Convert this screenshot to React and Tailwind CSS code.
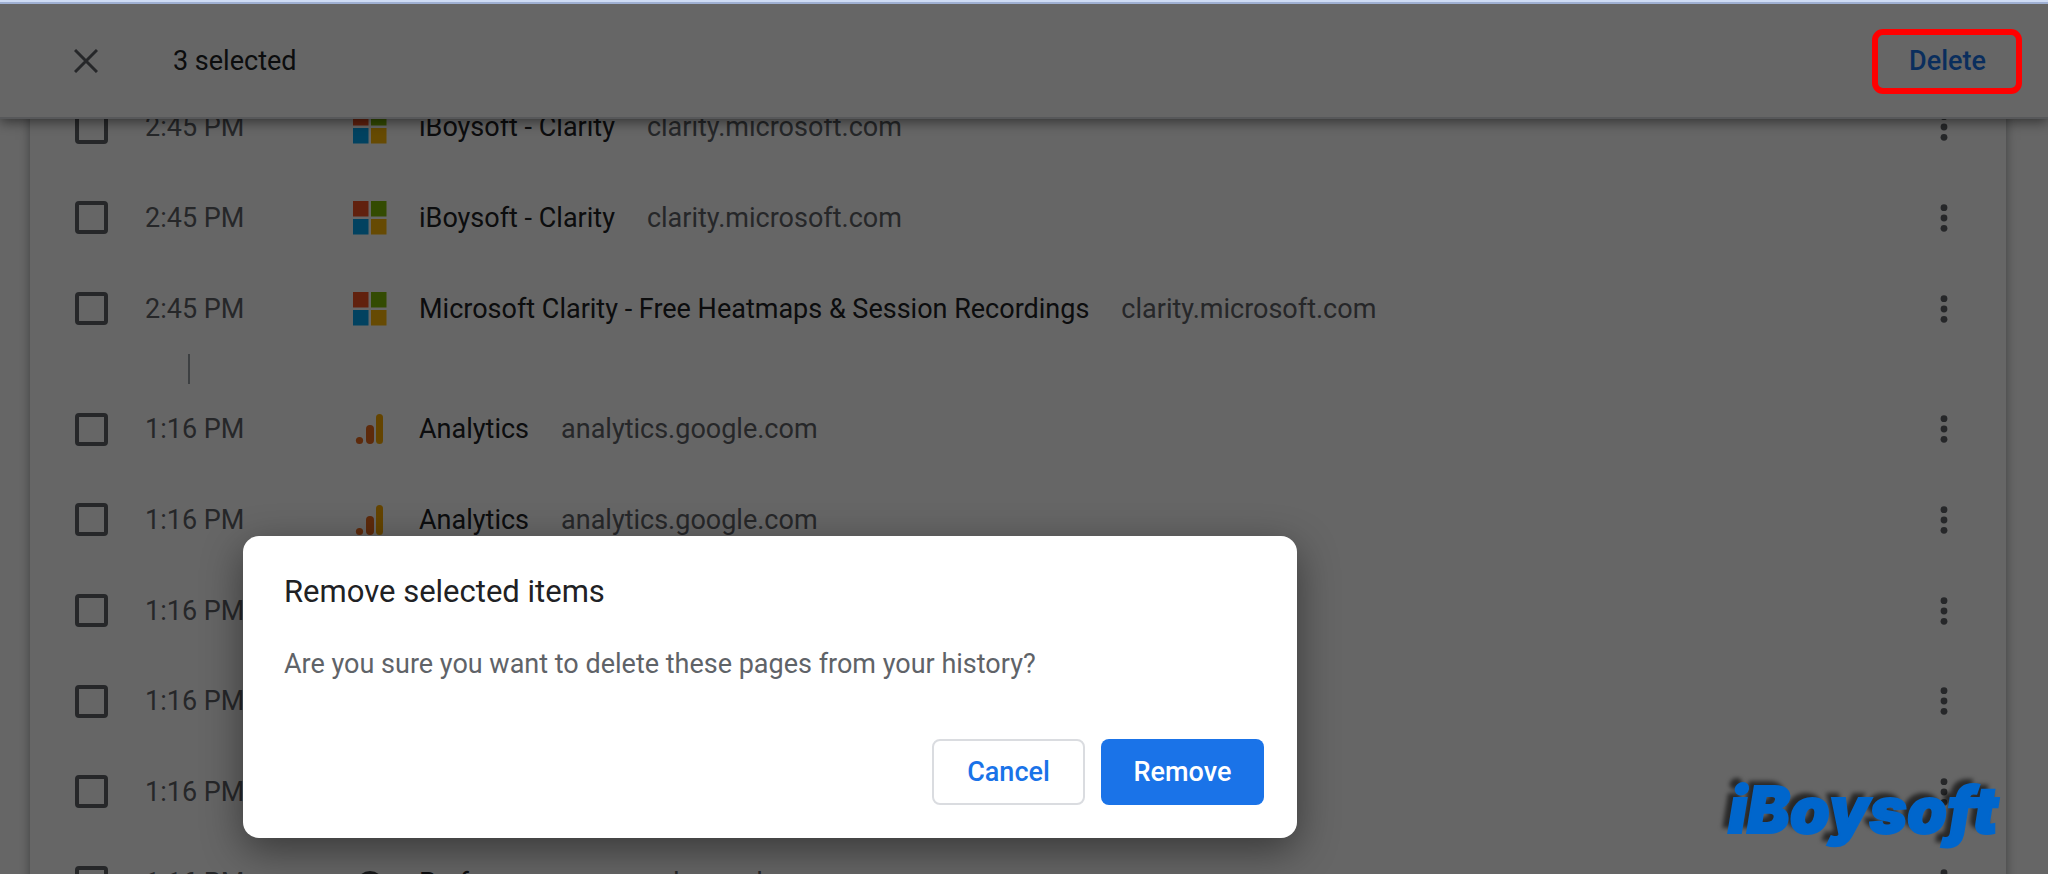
import React from "react";

const visits = [
  { time: "2:45 PM", icon: "microsoft", title: "iBoysoft - Clarity", domain: "clarity.microsoft.com" },
  { time: "2:45 PM", icon: "microsoft", title: "iBoysoft - Clarity", domain: "clarity.microsoft.com" },
  { time: "2:45 PM", icon: "microsoft", title: "Microsoft Clarity - Free Heatmaps & Session Recordings", domain: "clarity.microsoft.com" },
];

const earlierVisits = [
  { time: "1:16 PM", icon: "analytics", title: "Analytics", domain: "analytics.google.com" },
  { time: "1:16 PM", icon: "analytics", title: "Analytics", domain: "analytics.google.com" },
  { time: "1:16 PM", icon: "analytics", title: "Analytics", domain: "analytics.google.com" },
  { time: "1:16 PM", icon: "analytics", title: "Analytics", domain: "analytics.google.com" },
  { time: "1:16 PM", icon: "analytics", title: "Analytics", domain: "analytics.google.com" },
  { time: "1:16 PM", icon: "search", title: "Performance", domain: "search.google.com" },
];

function Favicon({ name }) {
  if (name === "microsoft") {
    return (
      <svg viewBox="0 0 34 34" className="size-[34px] shrink-0" aria-hidden="true">
        <rect x="0" y="0" width="15.5" height="15.5" fill="#f35325" />
        <rect x="18" y="0" width="15.5" height="15.5" fill="#81bc06" />
        <rect x="0" y="18" width="15.5" height="15.5" fill="#05a6f0" />
        <rect x="18" y="18" width="15.5" height="15.5" fill="#ffba08" />
      </svg>
    );
  }
  if (name === "analytics") {
    return (
      <svg viewBox="0 0 34 34" className="size-[34px] shrink-0" aria-hidden="true">
        <rect x="23" y="2" width="7" height="30" rx="3.5" fill="#f9ab00" />
        <rect x="13" y="13" width="8" height="19" rx="4" fill="#e8691c" />
        <circle cx="6.5" cy="28.5" r="3.6" fill="#e8691c" />
      </svg>
    );
  }
  return (
    <svg viewBox="0 0 34 34" className="size-[34px] shrink-0" aria-hidden="true">
      <circle cx="17" cy="19" r="12" fill="none" stroke="#3c4043" strokeWidth="4" />
    </svg>
  );
}

function Row({ id, visit }) {
  return (
    <li className="flex items-center pr-[42px] pl-[45px]">
      <input
        id={id}
        type="checkbox"
        className="size-[33px] shrink-0 appearance-none rounded-[4px] border-4 border-[#5f6368]"
      />
      <label htmlFor={id} className="flex flex-1 items-center">
        <span className="ml-[37px] w-[208px] text-[#5f6368]">{visit.time}</span>
        <Favicon name={visit.icon} />
        <span className="ml-8 text-[#202124]">{visit.title}</span>
        <span className="ml-8 text-[#5f6368]">{visit.domain}</span>
      </label>
      <button type="button" aria-label="Actions" className="flex w-10 justify-center">
        <svg viewBox="0 0 8 28" className="h-7 w-2" fill="#5f6368" aria-hidden="true">
          <circle cx="4" cy="3.7" r="3.4" />
          <circle cx="4" cy="14" r="3.4" />
          <circle cx="4" cy="24.3" r="3.4" />
        </svg>
      </button>
    </li>
  );
}

export default function App() {
  return (
    <div className="relative flex h-screen flex-col overflow-hidden bg-white font-[Roboto,sans-serif] text-[27px] leading-8">
      <div className="relative z-30 h-1 shrink-0 border-b-2 border-[#9fb0d3] bg-[#cfdcf5]" />
      <header className="relative z-10 flex h-[115px] shrink-0 items-center border-b-2 border-[#dadce0] bg-white pr-[62px] pl-[74px] shadow-[0_3px_12px_rgba(0,0,0,0.5)]">
        <button type="button" aria-label="Cancel selection">
          <svg viewBox="0 0 24 24" className="size-6" stroke="#5f6368" strokeWidth="3" aria-hidden="true">
            <path d="M1 1L23 23M23 1L1 23" />
          </svg>
        </button>
        <span className="ml-[75px] flex-1 text-[#202124]">3 selected</span>
        <button type="button" className="font-medium text-[#1a73e8]">Delete</button>
      </header>
      <main className="mx-[30px] -mt-[37px] mr-[42px] flex-1 bg-white shadow-[0_0_10px_rgba(60,64,67,0.5)]">
        <ul className="grid h-[272px] grid-rows-3">
          {visits.map((v, i) => (
            <Row key={i} id={"recent-" + i} visit={v} />
          ))}
        </ul>
        <div className="flex h-[30px] items-center pl-[158px]">
          <div className="h-[30px] w-0.5 bg-[#9aa0a6]" />
        </div>
        <ul className="grid h-[544px] grid-rows-6">
          {earlierVisits.map((v, i) => (
            <Row key={i} id={"earlier-" + i} visit={v} />
          ))}
        </ul>
      </main>

      <div className="absolute inset-0 z-20 bg-black/60" />

      <div className="absolute top-[29px] right-[26px] z-30 h-[65px] w-[150px] rounded-[11px] border-[6px] border-[#ff0000]" />

      <div
        role="dialog"
        aria-labelledby="dialog-title"
        className="absolute top-[536px] left-[243px] z-30 w-[1054px] rounded-[16px] bg-white px-[33px] pt-10 pb-[33px] shadow-[0_12px_40px_rgba(0,0,0,0.45)]"
      >
        <h2 id="dialog-title" className="pl-2 text-[31px] leading-8 text-[#202124]">Remove selected items</h2>
        <p className="mt-10 pl-2 text-[#5f6368]">Are you sure you want to delete these pages from your history?</p>
        <div className="mt-[59px] flex justify-end gap-4 font-medium">
          <button type="button" className="h-[66px] w-[153px] rounded-[8px] border-2 border-[#dadce0] text-[#1a73e8]">Cancel</button>
          <button type="button" className="h-[66px] w-[163px] rounded-[8px] bg-[#1a73e8] text-white">Remove</button>
        </div>
      </div>

      <div className="absolute right-[50px] bottom-[26px] z-30 font-[Inter,sans-serif] text-[64px] leading-[76px] font-black text-[#0066cc] italic [-webkit-text-stroke:2px_#0066cc] [text-shadow:-6px_-5px_4px_rgba(0,0,0,0.6)]">
        iBoysoft
      </div>
    </div>
  );
}
